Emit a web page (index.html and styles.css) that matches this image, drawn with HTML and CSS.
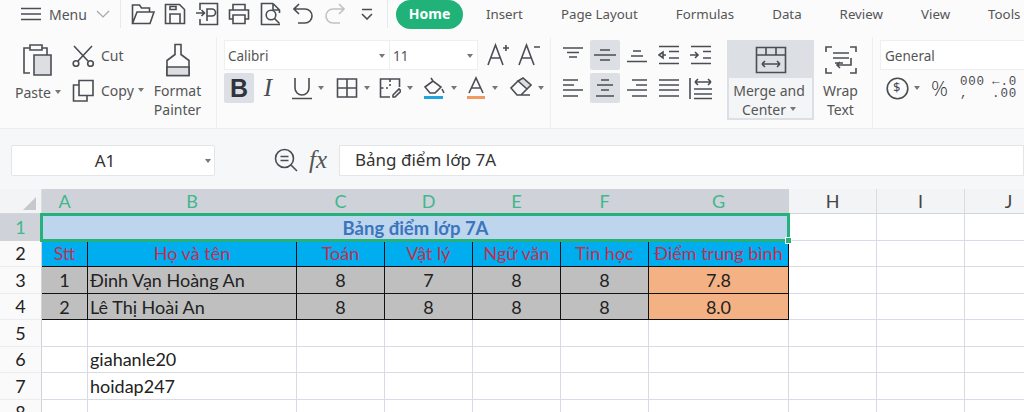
FILE: index.html
```html
<!DOCTYPE html>
<html lang="en">
<head>
    <meta charset="UTF-8">
    <title>Bảng điểm lớp 7A</title>
    <link rel="stylesheet" href="styles.css">
</head>
<body>
    <div class="topbar">
        <div class="menu">
            <svg width="20" height="14" viewBox="0 0 20 14"><path d="M0 1.500h20M0 7h20M0 12.500h20"/></svg>
            <span>Menu</span>
            <svg class="chev" width="14" height="8" viewBox="0 0 14 8"><path d="M1 1l6 6 6-6"/></svg>
        </div>
        <div class="quick">
            <button><svg width="24" height="24" viewBox="0 0 24 24"><path d="M1.500 21.500V3h7l2 3h8v4M1.500 21.500h17.500l4-11.500H6z"/></svg></button>
            <button><svg width="22" height="22" viewBox="0 0 22 22"><path d="M1.500 1.500h14l5 5v14h-19zM6 20.500V11h10v9.500M6 3.500h6v3H6z"/></svg></button>
            <button><svg width="24" height="24" viewBox="0 0 24 24"><path d="M5 8V1.500h17.500v21H5V17M1 11h8M6.500 8l3 3-3 3M12 19V7h5a3 3 0 010 7h-5"/></svg></button>
            <button><svg width="22" height="22" viewBox="0 0 22 22"><path d="M5 7V1.500h12V7M5 16H1.500V7h19v9H17M5 12h12v8.500H5z"/></svg></button>
            <button><svg width="22" height="24" viewBox="0 0 22 24"><path d="M13 1.500H1.500v21H20M13 1.500l6.500 6.500v3M13 1.500V8h6.500"/><circle cx="11" cy="13" r="4.800"/><path d="M14.500 16.500l5 5"/></svg></button>
            <button><svg width="20" height="22" viewBox="0 0 20 22"><path d="M6 1L1 6l5 5M1 6h11a6.500 6.500 0 010 14H5"/></svg></button>
            <button class="off"><svg width="20" height="22" viewBox="0 0 20 22"><path d="M14 1l5 5-5 5M19 6H8a6.500 6.500 0 000 14h7"/></svg></button>
            <button><svg width="12" height="12" viewBox="0 0 12 12"><path d="M1 1.500h10M1 6l5 5 5-5"/></svg></button>
        </div>
        <nav class="tabs">
            <a class="tab-home">Home</a>
            <div class="tab-list">
                <a>Insert</a>
                <a>Page Layout</a>
                <a>Formulas</a>
                <a>Data</a>
                <a>Review</a>
                <a>View</a>
                <a>Tools</a>
            </div>
        </nav>
    </div>

    <div class="ribbon">
        <section class="group clipboard">
            <div class="big paste">
                <svg width="32" height="34" viewBox="0 0 32 34"><path d="M8 30H2V5h6M20 5h5v7"/><path d="M8 2h12v5H8z"/><path class="fill" d="M12 12h17v20H12z"/></svg>
                <span class="caret-text">Paste</span>
            </div>
            <div class="cut-copy">
                <div class="small">
                    <svg width="23" height="22" viewBox="0 0 23 22"><path d="M2 1l14 15M20 1L6 16"/><circle cx="4" cy="18.500" r="2.800"/><circle cx="18.500" cy="18.500" r="2.800"/></svg>
                    <span>Cut</span>
                </div>
                <div class="small">
                    <svg width="23" height="23" viewBox="0 0 23 23"><path d="M7 1.500h14v15H7zM7 6H1.500v16H15v-5.500"/></svg>
                    <span class="caret-text">Copy</span>
                </div>
            </div>
            <div class="big painter">
                <svg width="26" height="34" viewBox="0 0 26 34"><path d="M10 1.500h6v10l8 6v15H2v-15l8-6z"/><path class="fill" d="M2 24h22v8.500H2z"/></svg>
                <span>Format<br>Painter</span>
            </div>
        </section>

        <section class="group font">
            <div class="field-row">
                <div class="field font-name">Calibri<i class="caret"></i></div>
                <div class="field font-size">11<i class="caret"></i></div>
                <div class="grow">
                    <svg width="22" height="24" viewBox="0 0 22 24"><path d="M1 23L8.500 3 16 23M4 16h9M16 6h6M19 3v6"/></svg>
                    <svg width="22" height="24" viewBox="0 0 22 24"><path d="M1 23L8.500 3 16 23M4 16h9M16 5h6"/></svg>
                </div>
            </div>
            <div class="tool-row">
                <div class="tool on bold">B</div>
                <div class="tool italic">I</div>
                <div class="tool drop"><svg width="20" height="24" viewBox="0 0 20 24"><path d="M3 2v10a7 7 0 0014 0V2M0 22.500h20"/></svg><i class="caret"></i></div>
                <div class="tool drop"><svg width="22" height="22" viewBox="0 0 22 22"><path d="M1.500 2h19v18h-19zM11 2v18M1.500 11h19"/></svg><i class="caret"></i></div>
                <div class="tool drop"><svg width="22" height="22" viewBox="0 0 22 22"><path d="M11 20H1.500V2h19v8M1.500 11h3M7 11h2M11 2v3M11 7v2M14 18l6-6 2 2-6 6h-2z"/></svg><i class="caret"></i></div>
                <div class="tool drop"><svg width="22" height="24" viewBox="0 0 22 24"><path d="M2 11l8-6 8 6-6 6H7zM8 2l2 3M19 13l2 4"/><path class="blue" d="M1 21.500h19"/></svg><i class="caret"></i></div>
                <div class="tool drop"><svg width="20" height="24" viewBox="0 0 20 24"><path d="M3 17L10 2l7 15M5.500 12h9"/><path class="orange" d="M1 21.500h18"/></svg><i class="caret"></i></div>
                <div class="tool drop"><svg width="22" height="22" viewBox="0 0 22 22"><path class="fill" d="M8 4l5-3 8 7-4 4z"/><path d="M8 4L1 11l6 7h4l6-6M7 18h13"/></svg><i class="caret"></i></div>
            </div>
        </section>

        <section class="group align">
            <div class="align-grid">
                <div class="tool"><svg width="20" height="16" viewBox="0 0 20 16"><path d="M0 1h20M4 5.500h12M6 10h8"/></svg></div>
                <div class="tool on"><svg width="22" height="16" viewBox="0 0 22 16"><path d="M6 3h10M0 8h22M6 13h10"/></svg></div>
                <div class="tool"><svg width="20" height="16" viewBox="0 0 20 16"><path d="M6 4h8M4 9h12M0 14.500h20"/></svg></div>
                <div class="tool"><svg width="22" height="20" viewBox="0 0 22 20"><path d="M1 1.500h20M11 6.500h10M1 10l4-3v6zM5 10h3M11 13h10M1 18.500h20"/></svg></div>
                <div class="tool"><svg width="22" height="20" viewBox="0 0 22 20"><path d="M1 1.500h20M13 6.500h8M0 10h7M5 7l3 3-3 3M13 13h8M1 18.500h20"/></svg></div>
                <div class="tool"><svg width="20" height="20" viewBox="0 0 20 20"><path d="M0 2h15M0 7h11M0 12h20M0 18h15"/></svg></div>
                <div class="tool on"><svg width="20" height="20" viewBox="0 0 20 20"><path d="M6 2h8M2 7h16M6 12h8M1 18h18"/></svg></div>
                <div class="tool"><svg width="20" height="20" viewBox="0 0 20 20"><path d="M5 2h15M9 7h11M0 12h20M5 18h15"/></svg></div>
                <div class="tool"><svg width="20" height="20" viewBox="0 0 20 20"><path d="M0 2h20M0 7h20M0 12h20M0 18h20"/></svg></div>
                <div class="tool"><svg width="24" height="24" viewBox="0 0 24 24"><path d="M1 2v21M6 6h16M6 6l3-3M6 6l3 3M22 6l-3-3M22 6l-3 3M5 13h18M5 18h18M5 22.500h18"/></svg></div>
            </div>
            <div class="merge">
                <div class="merge-top"><svg width="32" height="28" viewBox="0 0 32 28"><path d="M1.500 1.500h29v25h-29zM1.500 9h29M11 1.500V9M21 1.500V9M7 18h18M7 18l3-3M7 18l3 3M25 18l-3-3M25 18l-3 3"/></svg></div>
                <div class="merge-label">Merge and<br><span class="caret-text">Center</span></div>
            </div>
            <div class="big wrap">
                <svg width="32" height="28" viewBox="0 0 32 28"><path d="M1 6V1h6M25 1h6v5M1 22v5h6M31 22v5h-6M8 7h16M8 12h16M10 17h8M26 12v7h-14M15 16l-3 3 3 3"/></svg>
                <span>Wrap<br>Text</span>
            </div>
        </section>

        <section class="group number">
            <div class="field number-format">General</div>
            <div class="tool-row number-row">
                <div class="tool drop"><svg width="23" height="23" viewBox="0 0 23 23"><circle cx="11.500" cy="11.500" r="10.300"/></svg><b class="dollar">$</b><i class="caret"></i></div>
                <div class="percent">%</div>
                <div class="thousand"><span>000</span><span>,</span></div>
                <div class="decimal"><span>←.0</span><span>.00</span></div>
            </div>
        </section>
    </div>

    <div class="formula-bar">
        <div class="name-box">A1<i class="caret"></i></div>
        <svg class="zoom-icon" width="24" height="24" viewBox="0 0 24 24"><circle cx="10.500" cy="10.500" r="9"/><path d="M17 17l6 6M6.500 8.500h8M6.500 12.500h8"/></svg>
        <span class="fx">fx</span>
        <div class="formula-input">Bảng điểm lớp 7A</div>
    </div>

    <div class="sheet">
        <div class="hd corner"></div><div class="hd sel">A</div><div class="hd sel">B</div><div class="hd sel">C</div><div class="hd sel">D</div><div class="hd sel">E</div><div class="hd sel">F</div><div class="hd sel">G</div><div class="hd">H</div><div class="hd">I</div><div class="hd">J</div>

        <div class="rn sel">1</div><div class="title">Bảng điểm lớp 7A</div><div class="c"></div><div class="c"></div><div class="c"></div>

        <div class="rn">2</div><div class="c th">Stt</div><div class="c th">Họ và tên</div><div class="c th">Toán</div><div class="c th">Vật lý</div><div class="c th">Ngữ văn</div><div class="c th">Tin học</div><div class="c th">Điểm trung bình</div><div class="c"></div><div class="c"></div><div class="c"></div>

        <div class="rn">3</div><div class="c td">1</div><div class="c td name">Đinh Vạn Hoàng An</div><div class="c td">8</div><div class="c td">7</div><div class="c td">8</div><div class="c td">8</div><div class="c td avg">7.8</div><div class="c"></div><div class="c"></div><div class="c"></div>

        <div class="rn">4</div><div class="c td">2</div><div class="c td name">Lê Thị Hoài An</div><div class="c td">8</div><div class="c td">8</div><div class="c td">8</div><div class="c td">8</div><div class="c td avg">8.0</div><div class="c"></div><div class="c"></div><div class="c"></div>

        <div class="rn">5</div><div class="c"></div><div class="c"></div><div class="c"></div><div class="c"></div><div class="c"></div><div class="c"></div><div class="c"></div><div class="c"></div><div class="c"></div><div class="c"></div>

        <div class="rn">6</div><div class="c"></div><div class="c name">giahanle20</div><div class="c"></div><div class="c"></div><div class="c"></div><div class="c"></div><div class="c"></div><div class="c"></div><div class="c"></div><div class="c"></div>

        <div class="rn">7</div><div class="c"></div><div class="c name">hoidap247</div><div class="c"></div><div class="c"></div><div class="c"></div><div class="c"></div><div class="c"></div><div class="c"></div><div class="c"></div><div class="c"></div>

        <div class="rn">8</div><div class="c"></div><div class="c"></div><div class="c"></div><div class="c"></div><div class="c"></div><div class="c"></div><div class="c"></div><div class="c"></div><div class="c"></div><div class="c"></div>
    </div>
</body>
</html>
```

FILE: styles.css
```css
html, body {
    margin: 0;
    padding: 0;
    height: 412px;
    overflow: hidden;
}

body {
    width: 1024px;
    background-color: #fbfbfc;
    font-family: "Noto Sans", sans-serif;
    font-size: 14px;
    color: #555;
}

svg {
    fill: none;
    stroke: #4a4d52;
    stroke-width: 1.6;
    display: block;
    flex: none;
}

svg .fill {
    fill: #dcdee1;
}

svg .blue {
    stroke: #1fa4dd;
    stroke-width: 3;
}

svg .orange {
    stroke: #f09a63;
    stroke-width: 3;
}

.caret {
    display: inline-block;
    width: 0;
    height: 0;
    border-left: 3.5px solid transparent;
    border-right: 3.5px solid transparent;
    border-top: 4px solid #777;
}

.caret-text::after {
    content: "";
    display: inline-block;
    margin-left: 4px;
    vertical-align: 4px;
    border-left: 3.5px solid transparent;
    border-right: 3.5px solid transparent;
    border-top: 4px solid #777;
}

/* top bar */
.topbar {
    display: flex;
    align-items: flex-start;
    height: 37px;
    width: 1024px;
    overflow: hidden;
}

.menu {
    display: flex;
    flex: none;
    align-items: center;
    width: 99px;
    height: 28px;
    padding-left: 21px;
    border-right: 1px solid #e8e9eb;
    gap: 8px;
}

.menu span {
    width: 39px;
}

.menu .chev {
    stroke: #a4a6aa;
    stroke-width: 1.2;
}

.quick {
    display: flex;
    flex: none;
    width: 267px;
    height: 28px;
    padding-left: 6px;
    border-right: 1px solid #e8e9eb;
    box-sizing: border-box;
}

.quick button {
    display: flex;
    justify-content: center;
    align-items: center;
    width: 32px;
    height: 28px;
    padding: 0;
    border: none;
    background: none;
}

.quick .off svg {
    stroke: #c0c2c5;
}

.tabs {
    display: flex;
    flex: none;
    align-items: center;
    height: 28px;
    margin-left: 8px;
    font-size: 13.3px;
}

.tab-home {
    width: 67px;
    height: 29px;
    line-height: 28px;
    text-align: center;
    border-radius: 15px;
    background-color: #21b27a;
    color: #fff;
    font-size: 14px;
    font-weight: 700;
}

.tab-list {
    display: flex;
    gap: 38px;
    margin-left: 23px;
    white-space: nowrap;
}

/* ribbon */
.ribbon {
    display: flex;
    width: 1024px;
    height: 91px;
    overflow: hidden;
    border-bottom: 1px solid #eceded;
}

.group {
    display: flex;
    flex: none;
    height: 92px;
    box-sizing: border-box;
    border-right: 1px solid #eeeff0;
    white-space: nowrap;
}

.clipboard {
    width: 217px;
    padding-left: 15px;
}

.big {
    display: flex;
    flex-direction: column;
    align-items: center;
    line-height: 19px;
    text-align: center;
}

.paste {
    width: 46px;
    padding-top: 6px;
}

.paste span {
    margin-top: 6px;
}

.cut-copy {
    width: 82px;
    margin-left: 11px;
    padding-top: 7px;
}

.small {
    display: flex;
    align-items: center;
    gap: 6px;
    height: 23px;
    margin-bottom: 12px;
}

.painter {
    width: 47px;
    padding-top: 6px;
}

.painter span {
    margin-top: 4px;
}

.font {
    flex-direction: column;
    width: 334px;
    padding: 3px 0 0 7px;
}

.field {
    display: flex;
    justify-content: space-between;
    align-items: center;
    height: 30px;
    padding: 1px 4px 0 3px;
    box-sizing: border-box;
    border: 1px solid #eeeff0;
    background-color: #fff;
    font-size: 13.5px;
}

.field-row {
    display: flex;
}

.font-name {
    width: 166px;
}

.font-size {
    width: 88px;
    border-left: none;
}

.grow {
    display: flex;
    gap: 9px;
    margin-left: 9px;
    padding-top: 2px;
}

.tool-row {
    display: flex;
    margin-top: 3px;
}

.tool {
    display: flex;
    justify-content: center;
    align-items: center;
    width: 30px;
    height: 30px;
    flex: none;
}

.on {
    background-color: #dcdfe4;
    border-radius: 2px;
}

.bold {
    font-family: "Liberation Sans", sans-serif;
    font-size: 25px;
    font-weight: 700;
    color: #2f343d;
}

.italic {
    font-family: "Liberation Serif", serif;
    font-size: 25px;
    font-style: italic;
    color: #4a4d52;
    margin: 0 9px 0 -1px;
}

.tool.drop {
    justify-content: flex-start;
    gap: 6px;
    width: 43.500px;
}

.align {
    width: 322px;
    padding: 3px 0 0 7px;
}

.align-grid {
    display: grid;
    grid-template-columns: repeat(5, 30px);
    grid-auto-rows: 30px;
    gap: 3px 2px;
    flex: none;
    width: 158px;
}

.merge {
    flex: none;
    width: 87px;
    height: 80px;
    margin-left: 11px;
    background-color: #dcdfe4;
}

.merge-top {
    display: flex;
    justify-content: center;
    height: 38px;
    padding-top: 6px;
    box-sizing: border-box;
}

.merge-label {
    height: 40px;
    margin: 0 2px;
    padding: 3px 3px 0 0;
    box-sizing: border-box;
    line-height: 19px;
    text-align: center;
    background-color: #f4f5f7;
}

.wrap {
    width: 41px;
    margin-left: 6px;
    padding-top: 6px;
}

.wrap span {
    margin-top: 7px;
}

.number {
    flex-direction: column;
    width: 151px;
    padding: 3px 0 0 7px;
    border-right: none;
}

.number-format {
    width: 160px;
    flex: none;
    padding-left: 4px;
}

.number-row {
    align-items: center;
    height: 30px;
    padding-left: 6px;
}

.number-row .drop {
    position: relative;
    gap: 5px;
    width: 34px;
}

.dollar {
    position: absolute;
    left: 7px;
    top: 5px;
    font-size: 13px;
    font-weight: 400;
    color: #4a4d52;
}

.percent {
    margin-left: 11px;
    width: 18px;
    font-family: "Open Sans", sans-serif;
    font-size: 21px;
    font-weight: 300;
    line-height: 30px;
    color: #33363b;
}

.thousand, .decimal {
    display: flex;
    flex-direction: column;
    font-family: "Liberation Mono", monospace;
    font-size: 12.5px;
    line-height: 12px;
    letter-spacing: 0.8px;
    color: #4a4d52;
    margin-left: 11px;
    width: 25px;
}

.decimal {
    margin-left: 7px;
    text-align: right;
}

/* formula bar */
.formula-bar {
    display: flex;
    align-items: center;
    height: 60px;
    padding: 2px 0 0 11px;
    box-sizing: border-box;
    background-color: #f6f7f8;
}

.name-box {
    display: flex;
    align-items: center;
    position: relative;
    justify-content: center;
    width: 204px;
    height: 31px;
    box-sizing: border-box;
    padding-right: 16px;
    border: 1px solid #e4e5e7;
    border-radius: 2px;
    background-color: #fff;
    font-size: 17px;
    color: #333;
}

.name-box .caret {
    position: absolute;
    right: 3px;
    top: 13px;
}

.zoom-icon {
    margin-left: 59px;
}

.fx {
    width: 30px;
    margin-left: 11px;
    font-family: "Liberation Serif", serif;
    font-style: italic;
    font-size: 25px;
    color: #555;
}

.formula-input {
    flex: 1;
    height: 31px;
    line-height: 28px;
    padding-left: 15px;
    box-sizing: border-box;
    border: 1px solid #e4e5e7;
    background-color: #fff;
    font-size: 17px;
    color: #333;
}

/* sheet */
.sheet {
    display: grid;
    grid-template-columns: 42px 46px 209px 88px 88px 88px 88px 140px 88px 88px 88px;
    grid-template-rows: 25px repeat(8, 26.5px);
    width: 1053px;
    background-color: #fff;
    font-family: Lato, sans-serif;
    font-size: 18px;
    color: #222;
}

.hd, .rn, .c {
    display: flex;
    justify-content: center;
    align-items: center;
    box-sizing: border-box;
    border-right: 1px solid #d8dae8;
    border-bottom: 1px solid #d8dae8;
}

.hd {
    background-color: #f3f4f6;
    border-right-color: #dcdde0;
    border-bottom-color: #d3d5da;
    color: #444;
}

.hd.sel, .rn.sel {
    background-color: #cfd2d9;
    color: #3fb88b;
    border-color: #cfd2d9;
}

.rn {
    border-right-color: #cfd2d9;
    border-bottom-color: #ebecef;
    background-color: #fafafa;
}

.corner {
    position: relative;
}

.corner::after {
    content: "";
    position: absolute;
    left: 23px;
    top: 8px;
    width: 13px;
    height: 13px;
    background-color: #c6c8cc;
    clip-path: polygon(100% 0, 100% 100%, 0 100%);
}

.title {
    grid-column: span 7;
    display: flex;
    justify-content: center;
    align-items: center;
    position: relative;
    padding-top: 1px;
    background-color: #bdd6ee;
    color: #3a75bd;
    font-size: 18.500px;
    font-weight: 700;
}

/* green selection frame sits over the merged cell */
.title::before {
    content: "";
    position: absolute;
    inset: -1px -1px -1px -2px;
    border: 3px solid #25b17b;
}

.title::after {
    content: "";
    position: absolute;
    right: -3px;
    bottom: -3px;
    width: 5px;
    height: 5px;
    background-color: #25b17b;
    border: 1px solid #fff;
}

.c.th, .c.td {
    border-right-color: #111;
    border-bottom-color: #111;
    white-space: nowrap;
}

.th {
    background-color: #00adef;
    color: #c2304f;
}

.td {
    padding-top: 1px;
    background-color: #bfbfbf;
}

.name {
    justify-content: flex-start;
    padding-left: 2px;
}

.avg {
    background-color: #f4b183;
}
```
